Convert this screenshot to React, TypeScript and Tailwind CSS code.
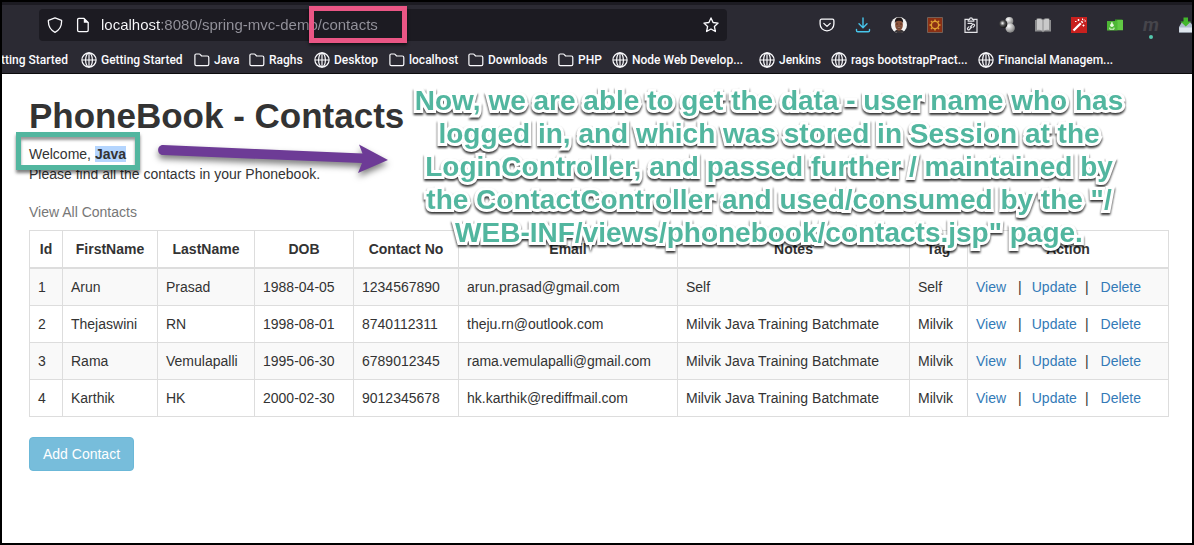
import type { ReactNode } from "react";

function Globe() {
  return (
    <svg className="size-4 shrink-0" viewBox="0 0 16 16" fill="none" stroke="currentColor" strokeWidth="1.2" aria-hidden="true">
      <circle cx="8" cy="8" r="7.1" />
      <ellipse cx="8" cy="8" rx="3.4" ry="7.1" />
      <path d="M1 8h14M8 1v14" />
    </svg>
  );
}

function Folder() {
  return (
    <svg className="size-4 shrink-0" viewBox="0 0 16 16" fill="none" stroke="currentColor" strokeWidth="1.2" strokeLinejoin="round" aria-hidden="true">
      <path d="M.9 12.2V3.3c0-.8.5-1.3 1.3-1.3h3c.4 0 .7.1.9.4L7.600 4h5.700c.9 0 1.500.6 1.500 1.400v6.800c0 .8-.6 1.400-1.500 1.400h-11c-.8 0-1.400-.6-1.400-1.400z" />
    </svg>
  );
}

const bookmarks: { label: string; folder?: boolean }[] = [
  { label: "Getting Started" },
  { label: "Java", folder: true },
  { label: "Raghs", folder: true },
  { label: "Desktop" },
  { label: "localhost", folder: true },
  { label: "Downloads", folder: true },
  { label: "PHP", folder: true },
  { label: "Node Web Develop..." },
  { label: "Jenkins" },
  { label: "rags bootstrapPract..." },
  { label: "Financial Managem..." },
];

const tools: { label: string; icon: ReactNode }[] = [
  {
    label: "Save to Pocket",
    icon: (
      <svg className="size-4" viewBox="0 0 16 16" fill="none" stroke="#fbfbfe" strokeWidth="1.300" strokeLinecap="round" strokeLinejoin="round">
        <path d="M2.600 2.200h10.800c.9 0 1.500.6 1.500 1.500v3.400c0 3.800-3 6.700-6.900 6.700S1.100 10.900 1.100 7.100V3.700c0-.9.600-1.500 1.500-1.500z" />
        <path d="M4.800 6.400 8 9.400l3.200-3" />
      </svg>
    ),
  },
  {
    label: "Downloads",
    icon: (
      <svg className="size-4" viewBox="0 0 16 16" fill="none" stroke="#48c6ec" strokeWidth="1.400" strokeLinecap="round" strokeLinejoin="round">
        <path d="M8 1v9.500M4 6.800l4 4 4-4M1.500 12.500v1c0 .8.500 1.300 1.300 1.300h10.400c.8 0 1.300-.5 1.300-1.300v-1" />
      </svg>
    ),
  },
  {
    label: "Profile",
    icon: (
      <svg className="size-4" viewBox="0 0 16 16">
        <circle cx="8" cy="8" r="8" fill="#f4f4f4" />
        <path d="M3.500 14.600c1-1.600 2-1.900 4.500-1.900s4 .3 5 1.800A8 8 0 0 1 3.500 14.600z" fill="#3a3538" />
        <ellipse cx="8" cy="7.800" rx="3.900" ry="6" fill="#8a543c" />
        <path d="M3.900 6.500C3.500 2.400 5.200.6 8 .6s4.500 1.800 4.100 5.900C11.700 4.700 10.800 3.800 8 3.800s-3.700.9-4.100 2.700z" fill="#1e1718" />
        <path d="M5 7h2M9 7h2" stroke="#4a291e" strokeWidth=".8" />
        <path d="M5.600 10c1.300-.5 3.500-.5 4.800 0-.5 2.800-4.300 2.800-4.800 0z" fill="#5d3829" />
        <path d="M6.500 10.700h3" stroke="#c9a495" strokeWidth=".7" />
      </svg>
    ),
  },
  {
    label: "Gear extension",
    icon: (
      <svg className="size-4" viewBox="0 0 16 16">
        <path fill="#8a3015" stroke="#766056" d="M.5.5h15v15H.5z" />
        <g stroke="#e0a030" fill="none">
          <circle cx="8" cy="8" r="3.600" strokeWidth="1.300" />
          <path strokeWidth="1.500" d="M8 2.500V4M8 12v1.500M2.500 8H4M12 8h1.500M4 4l1.200 1.200M10.800 10.800 12 12M4 12l1.200-1.200M10.800 5.200 12 4" />
        </g>
      </svg>
    ),
  },
  {
    label: "Copy link",
    icon: (
      <svg className="size-4" viewBox="0 0 16 16" fill="none" stroke="#e4e4e8" strokeWidth="1.200">
        <path d="M5 2.300H2v13h12v-13h-3M5.200 4.200h5.600V2.300H9.400a1.400 1.400 0 0 0-2.800 0H5.200z" />
        <path strokeLinecap="round" d="m7.300 9.800 2.300-2.300c1-1 2.700.5 1.600 1.700l-1 1M8.700 10.200l-2.300 2.300c-1.100 1.100-2.700-.5-1.600-1.700l1-1M5 6.300h4" />
      </svg>
    ),
  },
  {
    label: "Spheres extension",
    icon: (
      <svg className="size-4" viewBox="0 0 16 16">
        <defs>
          <radialGradient id="light" cx=".35" cy=".3" r=".75"><stop stopColor="#fff" /><stop offset="1" stopColor="#777" /></radialGradient>
          <radialGradient id="dark" cx=".4" cy=".4" r=".65"><stop stopColor="#fff" /><stop offset=".45" stopColor="#555" /><stop offset="1" stopColor="#0c0c0c" /></radialGradient>
        </defs>
        <circle cx="10.300" cy="4" r="4" fill="url(#light)" />
        <circle cx="11.200" cy="11" r="4.700" fill="url(#light)" />
        <circle cx="4.300" cy="7" r="4" fill="url(#dark)" />
      </svg>
    ),
  },
  {
    label: "Reader",
    icon: (
      <svg className="size-4" viewBox="0 0 16 16">
        <path d="M0 3h1.500V1.800C4 1 6.500 1.300 8 2.600c1.500-1.300 4-1.600 6.500-.8V3H16v11.500H9.500L8 15.200l-1.500-.7H0z" fill="#8d8d8f" />
        <path d="M2 2.300c2-.6 4.200-.3 5.500.9v10.600c-1.500-1-3.500-1.200-5.500-.8zM14 2.300c-2-.6-4.200-.3-5.500.9v10.600c1.500-1 3.500-1.200 5.500-.8z" fill="#c9c9ca" />
      </svg>
    ),
  },
  {
    label: "Magic wand",
    icon: (
      <svg className="size-4" viewBox="0 0 16 16">
        <path fill="#c8201e" d="M0 0h16v16H0z" />
        <path d="m2.500 13.500 7.300-7.300" stroke="#fff" strokeWidth="2.300" />
        <path d="m10.300 4.300 1.500 1.500" stroke="#fff" strokeWidth="1.500" />
        <path d="M7.500 2v2M6.500 3h2M11.500 1.500v1.500M13.500 4h1.500M12.500 7.500v2M11.500 8.500h2M4 4.500h1.500M12.300 3.300l.8-.8" stroke="#fff" strokeWidth="1" />
      </svg>
    ),
  },
  {
    label: "Green folder",
    icon: (
      <svg className="size-4" viewBox="0 0 16 16">
        <path d="M8 2.500h7.300l.7 1.300V13H8z" fill="#3b9f26" />
        <path d="M0 4.300h9.500l1.200-1.200H16v10.100H0z" fill="#61c944" />
        <path d="M0 4.300h10.500v9H0z" fill="#4db835" />
        <path d="M2.800 10.500v1.700h4.200v-1.700" stroke="#d9f4cf" strokeWidth="1" fill="none" />
        <path d="M4.900 5.200v3" stroke="#e8fbe0" strokeWidth="1.400" />
        <circle cx="4.900" cy="8.300" r="1.800" fill="#e8fbe0" />
      </svg>
    ),
  },
  {
    label: "Media extension",
    icon: (
      <span className="relative flex size-4 items-center justify-center text-[19px] leading-4 font-bold text-[#46454b] italic">
        m
        <span className="absolute top-[18px] left-[6px] size-1 rounded-full bg-[#54c7ad]" />
      </span>
    ),
  },
  {
    label: "Download manager",
    icon: (
      <svg className="size-4" viewBox="0 0 16 16">
        <path d="M3 5h8l4 5v5.500H0V10z" fill="#aebccb" />
        <path d="M.3 10.500h14.700v4.800H.3z" fill="#dfe6ee" />
        <path d="M4.500.5h4.500v4h3L6.800 9.500 1.500 4.500h3z" fill="#42b72b" />
      </svg>
    ),
  },
];

function BrowserBar() {
  return (
    <header className="border-t-[3px] border-b border-t-[#1c1b22] border-b-[#0c0c0d] bg-[#2b2a33] font-['Roboto',sans-serif] text-[#fbfbfe]">
      <div className="flex items-center overflow-hidden pt-1 pl-[37px]">
        <div className="flex h-8 min-w-0 flex-1 items-center rounded bg-[#1c1b22] px-2">
          <svg className="size-4 shrink-0" viewBox="0 0 16 16" fill="none" stroke="currentColor" strokeWidth="1.300" strokeLinejoin="round" aria-hidden="true">
            <path d="M8 .9 14.600 3.300c.3 5.600-1.600 9.500-6.600 12C3 12.800 1.100 8.900 1.400 3.300z" />
          </svg>
          <svg className="ml-3 size-4 shrink-0" viewBox="0 0 16 16" aria-hidden="true">
            <path d="M3.900 1.300h5l4.300 4.200v7.800c0 .8-.5 1.400-1.300 1.400h-8c-.8 0-1.300-.6-1.300-1.400V2.700c0-.8.500-1.400 1.300-1.400z" fill="none" stroke="currentColor" strokeWidth="1.300" />
            <path d="M8.800 1v4.800h4.700z" fill="currentColor" />
          </svg>
          <input
            aria-label="Address"
            className="ml-[10px] min-w-0 flex-1 bg-[linear-gradient(90deg,#fbfbfe_59px,#94939c_59px)] bg-clip-text font-['Liberation_Sans',Arial,sans-serif] text-[15px] text-transparent outline-none"
            defaultValue="localhost:8080/spring-mvc-demo/contacts"
          />
          <button aria-label="Bookmark this page">
            <svg className="size-4" viewBox="0 0 16 16" fill="none" stroke="currentColor" strokeWidth="1.300" strokeLinejoin="round">
              <path d="m8 .9 2.100 4.600 5 .6-3.700 3.400 1 5L8 12l-4.400 2.500 1-5L.9 6.100l5-.6z" />
            </svg>
          </button>
        </div>
        <div className="ml-[82px] flex w-[383px] shrink-0">
          {tools.map((tool) => (
            <button key={tool.label} aria-label={tool.label} className="flex h-8 w-9 shrink-0 items-center justify-center">
              {tool.icon}
            </button>
          ))}
        </div>
      </div>
      <nav className="grid h-8 grid-cols-[79px_113px_55px_65px_75px_79px_90px_54px_147px_72px_147px_1fr] items-center overflow-hidden pt-[6px] text-[12px] font-medium whitespace-nowrap">
        <a href="#" className="flex w-[66px] justify-end overflow-hidden">
          <span>tting Started</span>
        </a>
        {bookmarks.map((b) => (
          <a key={b.label} href="#" className="flex items-center gap-1">
            {b.folder ? <Folder /> : <Globe />}
            {b.label}
          </a>
        ))}
      </nav>
    </header>
  );
}

const headings = ["Id", "FirstName", "LastName", "DOB", "Contact No", "Email", "Notes", "Tag", "Action"];

const contacts = [
  ["1", "Arun", "Prasad", "1988-04-05", "1234567890", "arun.prasad@gmail.com", "Self", "Self"],
  ["2", "Thejaswini", "RN", "1998-08-01", "8740112311", "theju.rn@outlook.com", "Milvik Java Training Batchmate", "Milvik"],
  ["3", "Rama", "Vemulapalli", "1995-06-30", "6789012345", "rama.vemulapalli@gmail.com", "Milvik Java Training Batchmate", "Milvik"],
  ["4", "Karthik", "HK", "2000-02-30", "9012345678", "hk.karthik@rediffmail.com", "Milvik Java Training Batchmate", "Milvik"],
];

function ContactsTable() {
  return (
    <table className="mt-2 w-full table-fixed border-collapse border border-[#ddd]">
      <colgroup>
        <col className="w-[33px]" />
        <col className="w-[95px]" />
        <col className="w-[97px]" />
        <col className="w-[99px]" />
        <col className="w-[105px]" />
        <col className="w-[219px]" />
        <col className="w-[232px]" />
        <col className="w-[58px]" />
        <col />
      </colgroup>
      <thead>
        <tr>
          {headings.map((h) => (
            <th key={h} className="border border-b-2 border-[#ddd] p-2 text-center font-bold">{h}</th>
          ))}
        </tr>
      </thead>
      <tbody>
        {contacts.map((row) => (
          <tr key={row[0]} className="odd:bg-[#f9f9f9]">
            {row.map((cell, i) => (
              <td key={i} className="border border-[#ddd] p-2">{cell}</td>
            ))}
            <td className="border border-[#ddd] p-2">
              <div className="flex text-[#337ab7]">
                <a href="#">View</a>
                <span className="mr-[10px] ml-3 text-[#333]">|</span>
                <a href="#">Update</a>
                <span className="mr-3 ml-2 text-[#333]">|</span>
                <a href="#">Delete</a>
              </div>
            </td>
          </tr>
        ))}
      </tbody>
    </table>
  );
}

function Annotations() {
  return (
    <div className="pointer-events-none absolute inset-0">
      <div className="absolute top-[4px] left-[307px] h-[37px] w-[98px] border-[5px] border-[#ea5685] shadow-[0_2px_3px_rgba(0,0,0,0.6)]" />
      <div className="absolute top-[130px] left-[14px] h-[38px] w-[124px] border-[5px] border-[#52b69f] shadow-[0_3px_3px_rgba(0,0,0,0.5),inset_0_3px_3px_rgba(0,0,0,0.4)]" />
      <svg className="absolute top-[138px] left-[150px] h-[50px] w-[250px] drop-shadow-[0_4px_3px_rgba(0,0,0,0.5)]" viewBox="152 140 250 50" aria-hidden="true">
        <path d="M163 145C156.500 145 156.500 155 163 155L362 163L358 173L388 160L359 144.500L362.500 153.500Z" fill="#6d3b96" />
      </svg>
      <p className="absolute top-[82px] left-[397px] w-[740px] text-center text-[28px] leading-[33px] font-bold whitespace-nowrap text-[#52b69f] drop-shadow-[0_2px_1px_rgba(0,0,0,0.8)] [-webkit-text-stroke:6px_#fff] [paint-order:stroke_fill] [stroke-linejoin:round]">
        Now, we are able to get the data - user name who has
        <br />
        logged in, and which was stored in Session at the
        <br />
        LoginController, and passed further / maintained by
        <br />
        the ContactController and used/consumed by the "/
        <br />
        WEB-INF/views/phonebook/contacts.jsp" page.
      </p>
    </div>
  );
}

export default function App() {
  return (
    <div className="relative min-h-screen border-2 border-black bg-white font-['Liberation_Sans',Arial,sans-serif] text-[14px] leading-5 text-[#333] antialiased">
      <BrowserBar />
      <main className="pt-[22px] pr-[23px] pb-10 pl-[27px]">
        <h1 className="mb-2 text-[35px] leading-10 font-bold">PhoneBook - Contacts</h1>
        <p>
          Welcome, <b className="bg-[#b4d5fe]">Java</b>
        </p>
        <p>Please find all the contacts in your Phonebook.</p>
        <p className="mt-[18px] text-[#777]">View All Contacts</p>
        <ContactsTable />
        <button className="mt-5 rounded border border-[#6bb8d8] bg-[#77bddb] px-[13px] py-[6px] text-white">Add Contact</button>
      </main>
      <Annotations />
    </div>
  );
}
